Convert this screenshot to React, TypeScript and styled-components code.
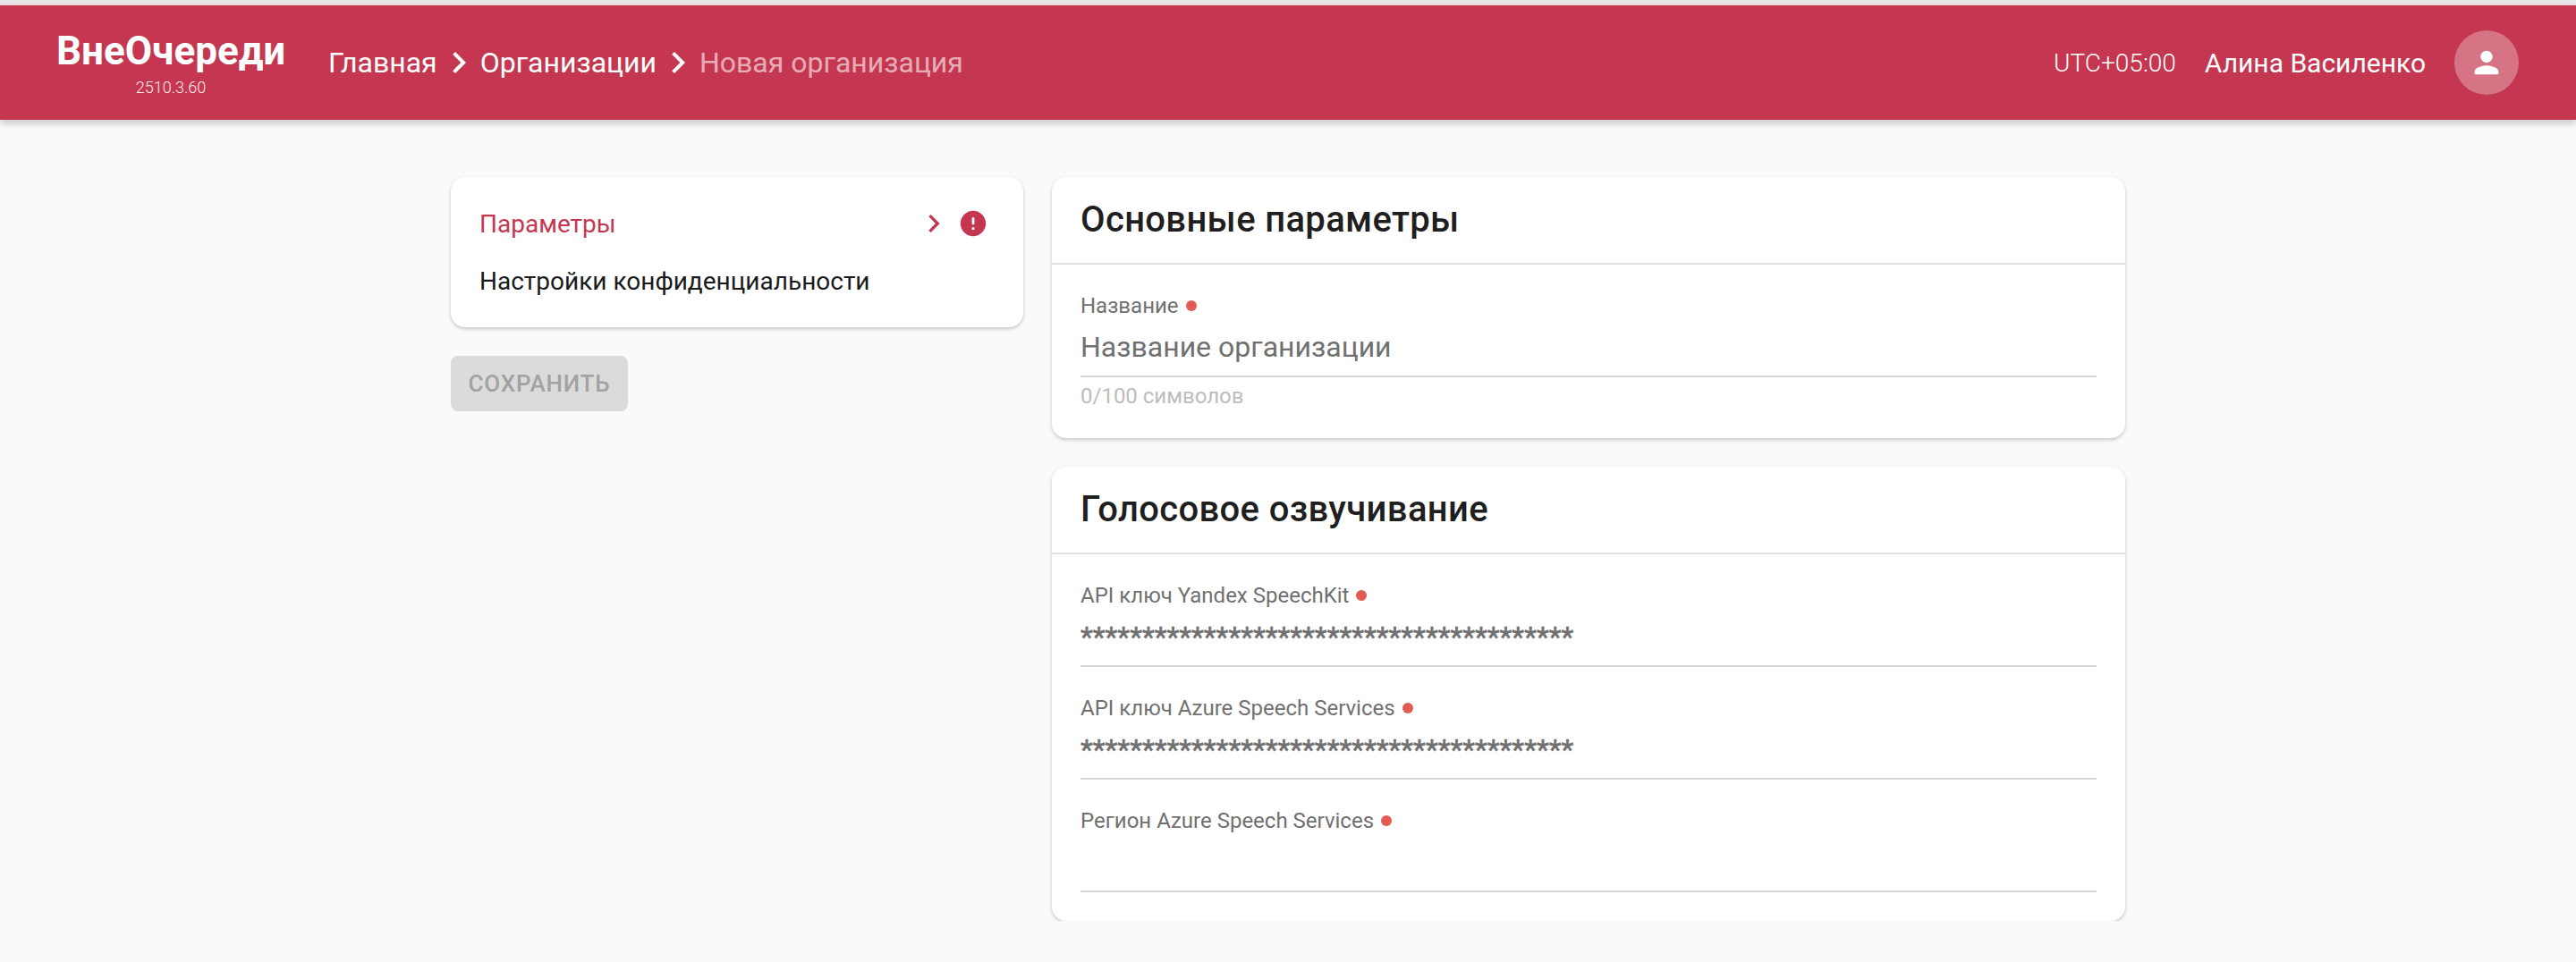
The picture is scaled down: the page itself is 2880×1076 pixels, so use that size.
import React from 'react';
import styled, { createGlobalStyle } from 'styled-components';

const GlobalStyle = createGlobalStyle`
  html, body {
    margin: 0;
    padding: 0;
    background: #fafafa;
  }
  body {
    font-family: Roboto, "Noto Sans", sans-serif;
  }
`;

const TopStrip = styled.div`
  height: 4px;
  background: #e6e6e6;
  border-bottom: 2px solid #f5d9de;
`;

const Header = styled.header`
  display: flex;
  align-items: center;
  height: 128px;
  padding: 0 64px;
  background: #c53750;
  color: #fff;
  box-shadow: 0 4px 8px rgba(0, 0, 0, 0.2);
`;

const Brand = styled.div`
  display: flex;
  flex-direction: column;
  align-items: center;
  width: 254px;
  margin-right: 49px;
`;

const BrandName = styled.div`
  font-size: 44px;
  font-weight: 700;
  line-height: 50px;
`;

const BrandVersion = styled.div`
  margin-top: 5px;
  font-size: 18px;
  line-height: 22px;
  font-weight: 300;
  opacity: 0.9;
`;

const Crumbs = styled.nav`
  display: flex;
  align-items: center;
  flex: 1;
  font-size: 32px;
`;

interface CrumbProps {
  current?: boolean;
}

const Crumb = styled.span<CrumbProps>`
  color: ${({ current }) => (current ? 'rgba(255, 255, 255, 0.6)' : '#fff')};
`;

const CrumbArrow = styled.svg`
  width: 48px;
  height: 48px;
  fill: #fff;
`;

const Utc = styled.span`
  font-size: 28px;
  font-weight: 300;
  margin-right: 32px;
`;

const UserName = styled.span`
  font-size: 30px;
  margin-right: 32px;
`;

const Avatar = styled.div`
  display: flex;
  align-items: center;
  justify-content: center;
  width: 72px;
  height: 72px;
  border-radius: 50%;
  background: rgba(255, 255, 255, 0.3);
`;

const AvatarIcon = styled.svg`
  width: 40px;
  height: 40px;
  fill: #fff;
`;

const Main = styled.main`
  display: flex;
  align-items: flex-start;
  justify-content: center;
  gap: 32px;
  padding-top: 64px;
`;

const Side = styled.aside`
  display: flex;
  flex-direction: column;
  align-items: flex-start;
  gap: 32px;
  width: 640px;
`;

const Card = styled.section`
  width: 100%;
  background: #fff;
  border-radius: 16px;
  box-shadow: 0 2px 4px rgba(0, 0, 0, 0.2);
`;

const Menu = styled(Card)`
  padding: 20px 0;
  height: 168px;
  box-sizing: border-box;
`;

interface MenuItemProps {
  active?: boolean;
}

const MenuItem = styled.div<MenuItemProps>`
  display: flex;
  align-items: center;
  height: 64px;
  padding: 0 32px;
  font-size: 28px;
  color: ${({ active }) => (active ? '#c53750' : '#1a1a1a')};
`;

const MenuLabel = styled.span`
  flex: 1;
`;

const MenuArrow = styled.svg`
  width: 40px;
  height: 40px;
  fill: #c53750;
  margin-right: 7px;
`;

const AlertIcon = styled.svg`
  width: 34px;
  height: 34px;
  fill: #c53750;
  margin-right: 7px;
`;

const SaveButton = styled.button`
  height: 62px;
  width: 198px;
  padding: 0;
  border: none;
  border-radius: 8px;
  background: #dbdbdb;
  color: #a2a2a2;
  font-family: inherit;
  font-size: 26px;
  font-weight: 500;
  letter-spacing: 0.8px;
`;

const Content = styled.div`
  display: flex;
  flex-direction: column;
  gap: 32px;
  width: 1200px;
`;

const CardHead = styled.h2`
  margin: 0;
  height: 96px;
  padding: 0 32px;
  display: flex;
  align-items: center;
  font-size: 40px;
  font-weight: 500;
  letter-spacing: 0.35px;
  line-height: 92px;
  color: #1f1f1f;
  border-bottom: 2px solid #e0e0e0;
`;

const CardBody = styled.div`
  padding: 30px 32px 32px;
`;

const Field = styled.div`
  & + & {
    margin-top: 30px;
  }
`;

const Label = styled.div`
  display: flex;
  align-items: center;
  gap: 8px;
  height: 32px;
  margin-bottom: -2px;
  font-size: 24px;
  color: #707070;
`;

const Dot = styled.span`
  width: 12px;
  height: 12px;
  border-radius: 50%;
  background: #e25c55;
`;

const Value = styled.div`
  height: 64px;
  display: flex;
  align-items: center;
  font-size: 32px;
  color: #707070;
  border-bottom: 2px solid #d9d9d9;
`;

const MaskedText = styled.span`
  -webkit-text-stroke: 0.6px #707070;
`;

const Hint = styled.div`
  margin-top: 7px;
  font-size: 24px;
  line-height: 29px;
  color: #bdbdbd;
`;

const MASK = '*'.repeat(40);

const App = () => (
  <>
    <GlobalStyle />
    <TopStrip />
    <Header>
      <Brand>
        <BrandName>ВнеОчереди</BrandName>
        <BrandVersion>2510.3.60</BrandVersion>
      </Brand>
      <Crumbs>
        <Crumb>Главная</Crumb>
        <CrumbArrow viewBox="0 0 24 24"><path d="M8.59 16.59 13.17 12 8.59 7.41 10 6l6 6-6 6z" /></CrumbArrow>
        <Crumb>Организации</Crumb>
        <CrumbArrow viewBox="0 0 24 24"><path d="M8.59 16.59 13.17 12 8.59 7.41 10 6l6 6-6 6z" /></CrumbArrow>
        <Crumb current>Новая организация</Crumb>
      </Crumbs>
      <Utc>UTC+05:00</Utc>
      <UserName>Алина Василенко</UserName>
      <Avatar>
        <AvatarIcon viewBox="0 0 24 24"><path d="M12 12c2.21 0 4-1.79 4-4s-1.79-4-4-4-4 1.79-4 4 1.79 4 4 4zm0 2c-2.67 0-8 1.34-8 4v1c0 .55.45 1 1 1h14c.55 0 1-.45 1-1v-1c0-2.66-5.33-4-8-4z" /></AvatarIcon>
      </Avatar>
    </Header>
    <Main>
      <Side>
        <Menu>
          <MenuItem active>
            <MenuLabel>Параметры</MenuLabel>
            <MenuArrow viewBox="0 0 24 24"><path d="M8.59 16.59 13.17 12 8.59 7.41 10 6l6 6-6 6z" /></MenuArrow>
            <AlertIcon viewBox="0 0 24 24"><path d="M12 2C6.48 2 2 6.48 2 12s4.48 10 10 10 10-4.48 10-10S17.52 2 12 2zm0 11c-.55 0-1-.45-1-1V8c0-.55.45-1 1-1s1 .45 1 1v4c0 .55-.45 1-1 1zm1 4h-2v-2h2v2z" /></AlertIcon>
          </MenuItem>
          <MenuItem>
            <MenuLabel>Настройки конфиденциальности</MenuLabel>
          </MenuItem>
        </Menu>
        <SaveButton disabled>СОХРАНИТЬ</SaveButton>
      </Side>
      <Content>
        <Card>
          <CardHead>Основные параметры</CardHead>
          <CardBody>
            <Field>
              <Label>Название<Dot /></Label>
              <Value>Название организации</Value>
              <Hint>0/100 символов</Hint>
            </Field>
          </CardBody>
        </Card>
        <Card>
          <CardHead>Голосовое озвучивание</CardHead>
          <CardBody>
            <Field>
              <Label>API ключ Yandex SpeechKit<Dot /></Label>
              <Value><MaskedText>{MASK}</MaskedText></Value>
            </Field>
            <Field>
              <Label>API ключ Azure Speech Services<Dot /></Label>
              <Value><MaskedText>{MASK}</MaskedText></Value>
            </Field>
            <Field>
              <Label>Регион Azure Speech Services<Dot /></Label>
              <Value />
            </Field>
          </CardBody>
        </Card>
      </Content>
    </Main>
  </>
);

export default App;
